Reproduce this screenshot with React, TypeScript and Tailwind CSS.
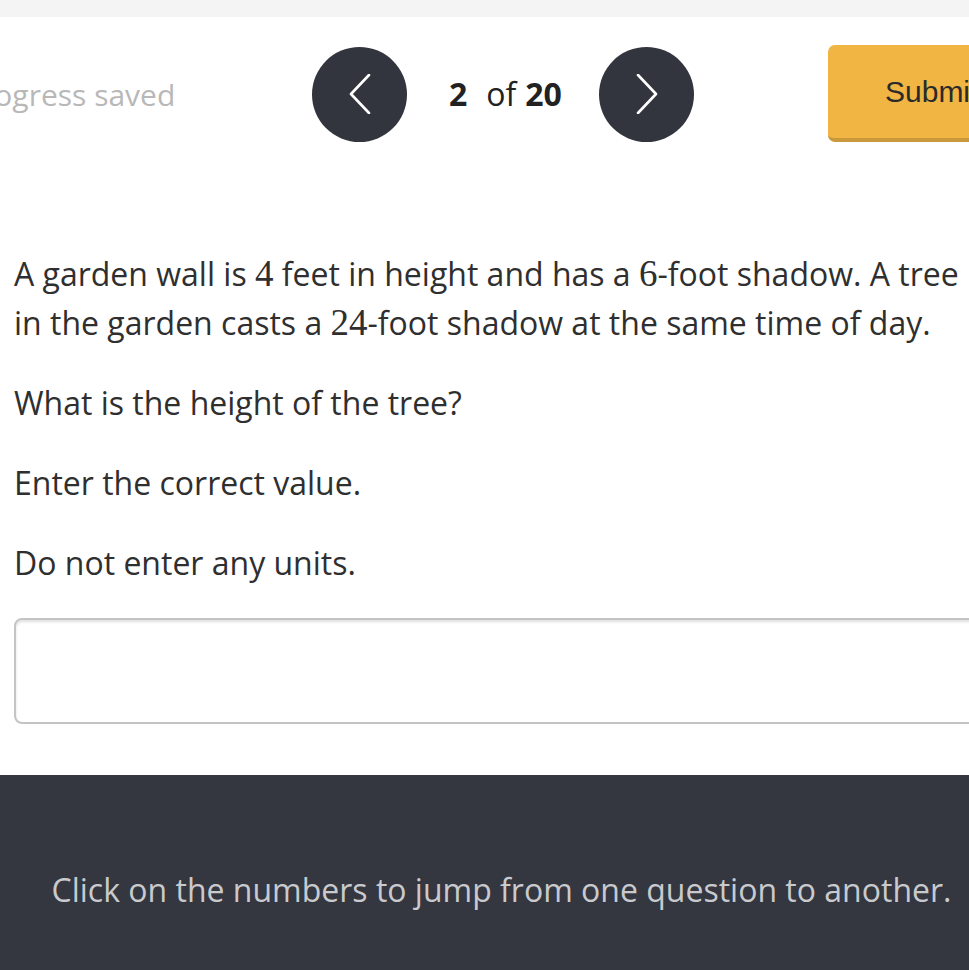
import { useState } from "react";

const sans = { fontFamily: '"Open Sans", "Noto Sans", sans-serif' };
const serif = { fontFamily: '"Liberation Serif", "Times New Roman", serif' };

function Num({ children }: { children: React.ReactNode }) {
  return (
    <span className="text-[37px] leading-none" style={serif}>{children}</span>
  );
}

function Chevron({ dir }: { dir: "left" | "right" }) {
  const points = dir === "left" ? "21,1 3,20 21,39" : "3,1 21,20 3,39";
  return (
    <svg width="24" height="40" viewBox="0 0 24 40" fill="none">
      <polyline points={points} stroke="white" strokeWidth="2.6" strokeLinecap="round" strokeLinejoin="round" />
    </svg>
  );
}

export default function App() {
  const [answer, setAnswer] = useState("");

  return (
    <div className="w-[969px] h-[970px] overflow-hidden bg-white flex flex-col" style={sans}>
      {/* top strip */}
      <div className="h-[17px] bg-[#f4f4f4] shrink-0"></div>

      {/* Header */}
      <div className="h-[154px] shrink-0 flex items-center">
        <div className="-ml-[36px] w-[348px] shrink-0 text-[30px] text-[#b8b8b8] whitespace-nowrap">Progress saved</div>
        <button className="w-[95px] h-[95px] shrink-0 rounded-full bg-[#33353e] flex items-center justify-center">
          <Chevron dir="left" />
        </button>
        <div className="ml-[42px] w-[116px] shrink-0 text-[32px] text-[#222] whitespace-nowrap">
          <span className="font-bold">2</span>
          <span className="ml-[19px]">of</span>
          <span className="ml-[9px] font-bold">20</span>
        </div>
        <button className="ml-[34px] w-[95px] h-[95px] shrink-0 rounded-full bg-[#33353e] flex items-center justify-center">
          <Chevron dir="right" />
        </button>
        <button
          className="ml-[134px] w-[220px] h-[97px] mb-[1px] shrink-0 rounded-[7px] bg-[#f0b542] border-b-[4px] border-[#c9993c] text-left pl-[57px] text-[30px] text-[#2a2a2a]"
          style={{ fontFamily: '"Liberation Sans", Arial, sans-serif' }}
        >
          Submit
        </button>
      </div>

      {/* Question */}
      <div className="pt-[78px] px-[14px] text-[32px] leading-[49px] text-[#2f2f2f] whitespace-nowrap">
        <p>
          A garden wall is <Num>4</Num> feet in height and has a <Num>6</Num>-foot shadow. A tree
        </p>
        <p>
          in the garden casts a <Num>24</Num>-foot shadow at the same time of day.
        </p>
        <p className="mt-[31px]">What is the height of the tree?</p>
        <p className="mt-[31px]">Enter the correct value.</p>
        <p className="mt-[31px]">Do not enter any units.</p>
        <input
          value={answer}
          onChange={(e) => setAnswer(e.target.value)}
          className="mt-[31px] block w-[990px] h-[106px] rounded-[8px] border-2 border-[#c4c4c4] shadow-[inset_0_2px_3px_rgba(0,0,0,0.12)] outline-none px-4 text-[32px]"
        />
      </div>

      {/* Footer */}
      <div className="mt-auto h-[195px] shrink-0 bg-[#343640] flex items-center justify-center pl-[34px]">
        <p className="text-[32px] text-[#c9cacd] mt-[34px] whitespace-nowrap">
          Click on the numbers to jump from one question to another.
        </p>
      </div>
    </div>
  );
}
